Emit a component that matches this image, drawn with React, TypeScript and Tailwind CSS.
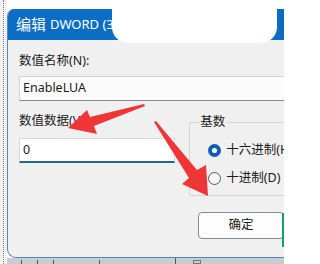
const font = "font-['Segoe_UI','Noto_Sans','Noto_Sans_CJK_SC',sans-serif]";

function Arrows() {
  return (
    <svg className="absolute inset-0 pointer-events-none" width={284} height={264} viewBox="0 0 284 264">
      {/* arrow to 数值数据 */}
      <polygon points="144,104 145,106 94,126 97,134 68,128 87,110 90,117" fill="#ee3636" />
      {/* arrow to 十进制 */}
      <polygon points="154,122 156,121 197,170 206,165 208,196 182,184 189,178" fill="#ee3636" />
    </svg>
  );
}

function Radio({ checked, label }: { checked?: boolean; label: string }) {
  return (
    <div className="flex items-center gap-[5px] h-[18px] whitespace-nowrap">
      {checked ? (
        <span className="w-[13px] h-[13px] rounded-full bg-[#0a5fb4] flex items-center justify-center shrink-0">
          <span className="w-[5px] h-[5px] rounded-full bg-white" />
        </span>
      ) : (
        <span className="w-[13px] h-[13px] rounded-full border border-[#5a5a5a] bg-[#f6f6f6] shrink-0" />
      )}
      <span className="text-[12.5px] text-[#1b1b1b]">{label}</span>
    </div>
  );
}

export default function App() {
  return (
    <div className={`relative w-[284px] h-[264px] overflow-hidden bg-white flex ${font}`}>
      {/* left desktop strip */}
      <div className="w-[7px] shrink-0 bg-[#f1f1f1] flex">
        <div className="ml-[3px] h-full border-l border-dotted border-[#7c7c7c]" />
      </div>

      <div className="flex-1 flex flex-col min-w-0">
        <div className="h-[9px] shrink-0 bg-white" />

        {/* dialog */}
        <div className="w-[300px] h-[249px] shrink-0 flex flex-col rounded-tl-[7px] rounded-bl-[9px] border-l border-b border-[#4f88c6] overflow-hidden bg-[#f0f0f0]">
          <div className="h-[31px] shrink-0 bg-[#0b6ec4] flex items-center pl-[8px] whitespace-nowrap text-white">
            <span className="text-[15px] leading-none">编辑</span>
            <span className="text-[13px] leading-none ml-[4px]">DWORD (32 位)值</span>
          </div>

          <div className="flex-1 flex flex-col pl-[11px] pt-[12px]">
            <div className="text-[12.5px] leading-[18px] text-[#1b1b1b]">数值名称(N):</div>
            <div className="mt-[6px] h-[25px] w-[280px] bg-[#fbfbfb] border border-[#d4d4d4] border-b-[#8a8a8a] flex items-center pl-[3px]">
              <span className="text-[12.5px] text-[#1b1b1b]">EnableLUA</span>
            </div>

            <div className="flex mt-[11px]">
              <div className="w-[160px] flex flex-col">
                <div className="text-[12.5px] leading-[18px] text-[#1b1b1b]">数值数据(V):</div>
                <div className="mt-[8px] h-[25px] bg-white border border-[#d8d8d8] border-b-2 border-b-[#1d6a8c] flex items-center pl-[3px]">
                  <span className="text-[12.5px] text-[#1b1b1b]">0</span>
                </div>
              </div>

              <fieldset className="ml-[14px] mt-[2px] w-[120px] h-[82px] border border-[#d5d5d5] rounded-[2px] pl-[18px]">
                <legend className="ml-[-9px] px-[1px] text-[12.5px] leading-[16px] text-[#1b1b1b]">基数</legend>
                <div className="flex flex-col gap-[10px] pt-[11px]">
                  <Radio checked label="十六进制(H)" />
                  <Radio label="十进制(D)" />
                </div>
              </fieldset>
            </div>

            <div className="flex mt-[16px] ml-[179px]">
              <button className="w-[86px] h-[27px] rounded-[4px] border border-[#7d8c99] bg-[#fdfdfd] text-[12.5px] text-[#1b1b1b] flex items-center justify-center">
                确定
              </button>
              <div className="w-[3px] h-[34px] mt-[1px] ml-[-2px] bg-[#16a05a]" />
            </div>
          </div>
        </div>

        {/* taskbar strip */}
        <div className="flex-1 bg-[#c9ccd0] flex items-end gap-[15px] pl-[14px]">
          <div className="w-px h-[4px] bg-[#555]" />
          <div className="w-px h-[4px] bg-[#555]" />
          <div className="w-px h-[4px] bg-[#555]" />
          <div className="w-px h-[4px] bg-[#555] ml-[30px]" />
          <div className="w-px h-[6px] bg-[#555] ml-[60px]" />
          <div className="w-[8px] h-[4px] border border-[#777] ml-[2px]" />
        </div>
      </div>

      {/* redaction blob */}
      <div className="absolute left-[112px] top-[-12px] w-[165px] h-[55px] bg-white rounded-[16px]" />

      <Arrows />
    </div>
  );
}
